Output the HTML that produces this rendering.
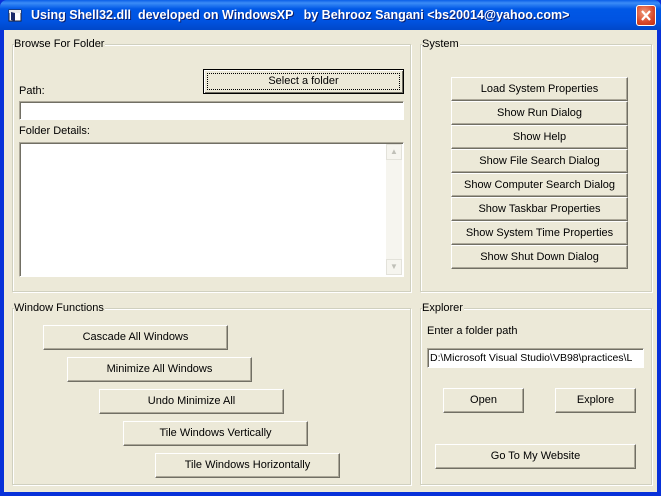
<!DOCTYPE html>
<html><head><meta charset="utf-8"><style>
*{box-sizing:border-box;margin:0;padding:0}
body{width:661px;height:496px;overflow:hidden;background:#0831d9;font-family:"Liberation Sans",sans-serif;font-size:11px;color:#000;position:relative}
.title{position:absolute;left:0;top:0;width:661px;height:30px;background:linear-gradient(#0a5fe8 0%,#3b8cf6 10%,#0058e6 30%,#0053e1 70%,#0047c9 100%);border-radius:7px 7px 0 0}
.title span{position:absolute;left:31px;top:8px;color:#fff;font-weight:bold;font-size:12.5px;text-shadow:1px 1px 0 #0a1e6e;white-space:pre}
.close{position:absolute;left:636px;top:5px;width:20px;height:21px;background:radial-gradient(circle at 40% 35%,#f09a7a,#d8482a 60%,#c03010);border:1px solid #fff;border-radius:3px}
.client{position:absolute;left:4px;top:30px;width:653px;height:462px;background:#ece9d8}
.grp{position:absolute;border:1px solid #d0d0bf;box-shadow:1px 1px 0 #fff inset,1px 1px 0 #fff}
.grp b{position:absolute;top:-7px;left:1px;background:#ece9d8;font-weight:normal;padding-right:1px;line-height:13px}
.btn{position:absolute;background:#ece9d8;border:1px solid;border-color:#fff #716f64 #716f64 #fff;box-shadow:inset -1px -1px 0 #aca899;text-align:center;line-height:22px;white-space:nowrap;font-size:11px}
.lbl{position:absolute;white-space:nowrap}
.in{position:absolute;background:#fff;border:1px solid;border-color:#aca899 #fff #fff #aca899;box-shadow:inset 1px 1px 0 #716f64}
</style></head><body>
<div class="title"><svg style="position:absolute;left:8px;top:8px" width="16" height="14"><path d="M1 2h12v11H1z" fill="#fff" stroke="#223" stroke-width="1"/><path d="M1 2h12v3H1z" fill="#eee"/><path d="M3 4l4 1v8l-4-1z" fill="#1b2a6a"/></svg><span>Using Shell32.dll  developed on WindowsXP   by Behrooz Sangani &lt;bs20014@yahoo.com&gt;</span>
<div class="close"><svg width="18" height="19"><path d="M5 5l8 9M13 5l-8 9" stroke="#fff" stroke-width="2.2"/></svg></div></div>
<div class="client">
<div class="grp" style="left:8px;top:14px;width:399px;height:248px"><b>Browse For Folder</b></div>
<div class="grp" style="left:416px;top:14px;width:232px;height:248px"><b>System</b></div>
<div class="grp" style="left:8px;top:278px;width:399px;height:177px"><b>Window Functions</b></div>
<div class="grp" style="left:416px;top:278px;width:232px;height:177px"><b>Explorer</b></div>

<div class="btn" style="left:199px;top:39px;width:201px;height:25px;border:1px solid #000;box-shadow:inset 1px 1px 0 #fff,inset -1px -1px 0 #716f64;line-height:22px"><div style="position:absolute;left:3px;top:3px;right:3px;bottom:3px;border:1px dotted #000"></div>Select a folder</div>
<div class="lbl" style="left:15px;top:55px">Path:</div>
<div class="in" style="left:15px;top:71px;width:385px;height:19px"></div>
<div class="lbl" style="left:15px;top:95px">Folder Details:</div>
<div class="in" style="left:15px;top:112px;width:385px;height:135px"><div style="position:absolute;right:1px;top:1px;width:16px;bottom:1px;background:#f6f5ef"><div style="height:16px;border:1px solid #e3e2da;color:#c0c0b8;font-size:8px;text-align:center;line-height:14px">&#9650;</div><div style="position:absolute;bottom:0;width:16px;height:16px;border:1px solid #e3e2da;color:#c0c0b8;font-size:8px;text-align:center;line-height:14px">&#9660;</div></div></div>

<div class="btn" style="left:447px;top:47px;width:177px;height:24px">Load System Properties</div>
<div class="btn" style="left:447px;top:71px;width:177px;height:24px">Show Run Dialog</div>
<div class="btn" style="left:447px;top:95px;width:177px;height:24px">Show Help</div>
<div class="btn" style="left:447px;top:119px;width:177px;height:24px">Show File Search Dialog</div>
<div class="btn" style="left:447px;top:143px;width:177px;height:24px">Show Computer Search Dialog</div>
<div class="btn" style="left:447px;top:167px;width:177px;height:24px">Show Taskbar Properties</div>
<div class="btn" style="left:447px;top:191px;width:177px;height:24px">Show System Time Properties</div>
<div class="btn" style="left:447px;top:215px;width:177px;height:24px">Show Shut Down Dialog</div>

<div class="btn" style="left:39px;top:295px;width:185px;height:25px">Cascade All Windows</div>
<div class="btn" style="left:63px;top:327px;width:185px;height:25px">Minimize All Windows</div>
<div class="btn" style="left:95px;top:359px;width:185px;height:25px">Undo Minimize All</div>
<div class="btn" style="left:119px;top:391px;width:185px;height:25px">Tile Windows Vertically</div>
<div class="btn" style="left:151px;top:423px;width:185px;height:25px">Tile Windows Horizontally</div>

<div class="lbl" style="left:423px;top:295px">Enter a folder path</div>
<div class="in" style="left:423px;top:318px;width:217px;height:20px;overflow:hidden;padding:3px 0 0 2px;white-space:nowrap;font-size:10.5px">D:\Microsoft Visual Studio\VB98\practices\L</div>
<div class="btn" style="left:439px;top:358px;width:81px;height:25px">Open</div>
<div class="btn" style="left:551px;top:358px;width:81px;height:25px">Explore</div>
<div class="btn" style="left:431px;top:414px;width:201px;height:25px">Go To My Website</div>
</div>
</body></html>
